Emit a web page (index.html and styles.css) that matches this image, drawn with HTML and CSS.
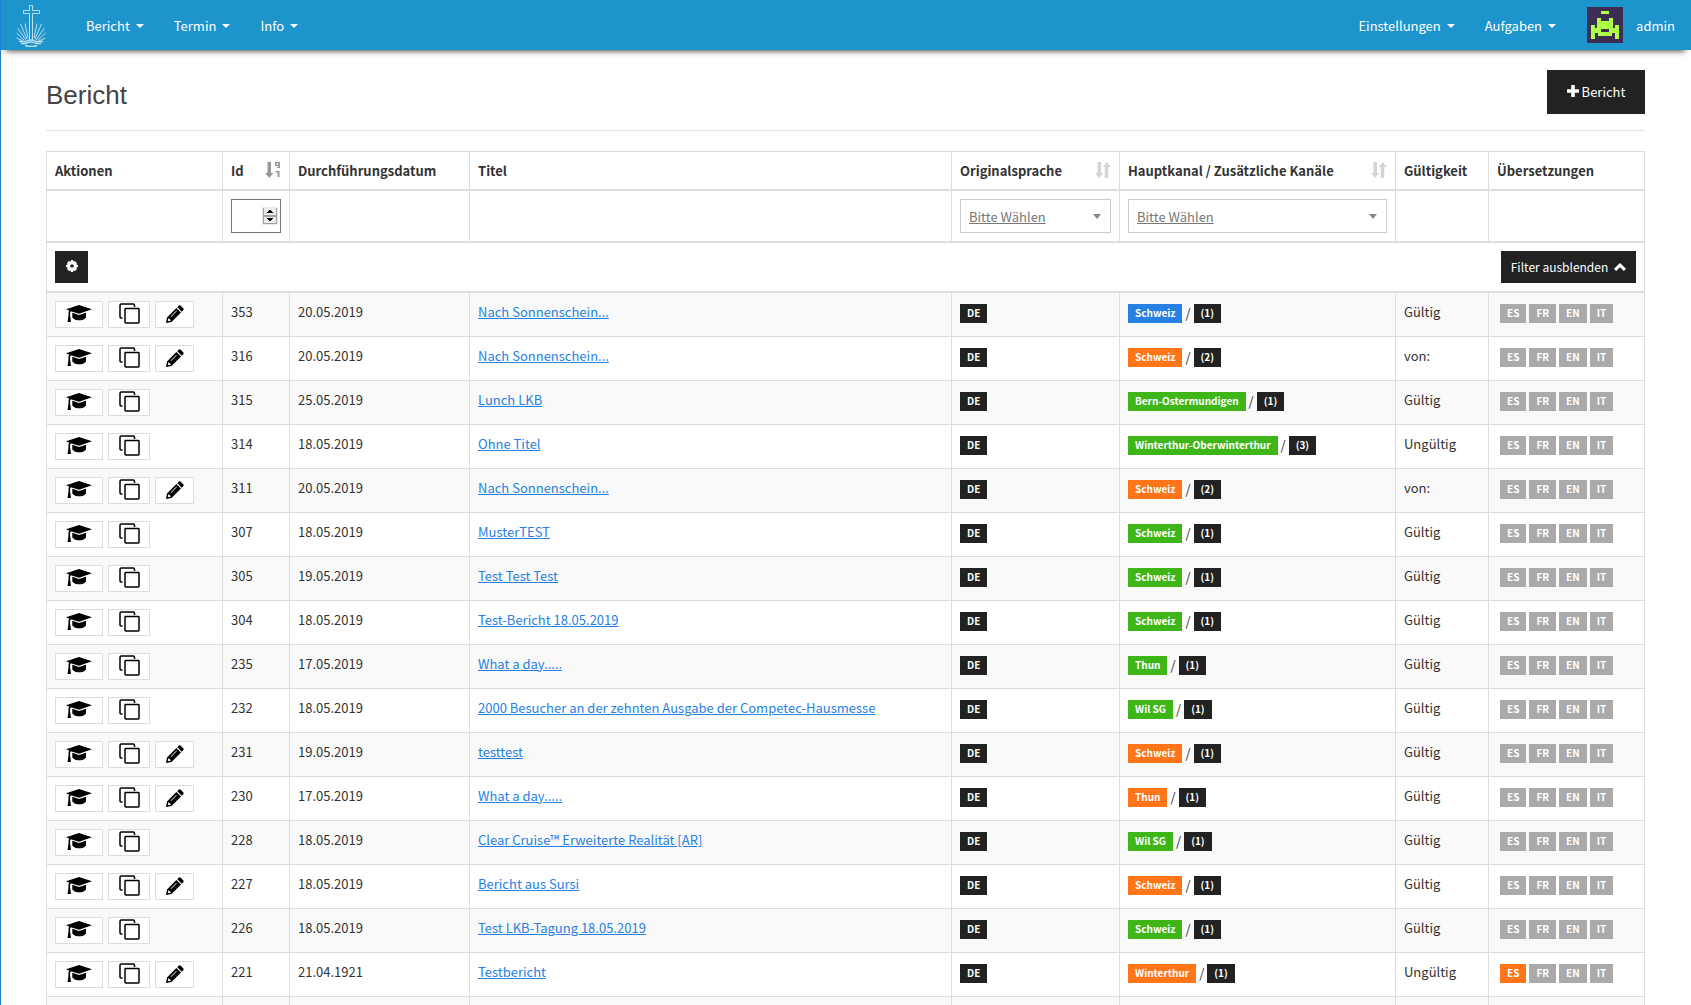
FILE: index.html
```html
<!DOCTYPE html>
<html lang="de">
<head>
<meta charset="utf-8">
<title>Bericht</title>
<link rel="stylesheet" href="styles.css">
</head>
<body>
<svg class="sprite" aria-hidden="true">
  <symbol id="i-cap" viewBox="0 0 26 17"><path d="M13 0 26 4.300 13 8.800 4.800 6.300C4.200 7.200 4 8.500 4.100 10.200L5 17H1.500L2.500 10.200C2.400 8.300 2.600 6.700 3.200 5.600L0 4.300ZM6.300 7.800 13 10 20 7.800V12.500C18.500 14.500 16 15.300 13.200 15.300S8 14.500 6.300 12.500Z"/></symbol>
  <symbol id="i-copy" viewBox="0 0 21 21"><path d="M3.500 15H2.200Q1 15 1 13.800V2.200Q1 1 2.200 1H14.300Q15.500 1 15.500 2.200V4M6.700 5.500H19.300Q20 5.500 20 6.200V19.300Q20 20 19.300 20H6.700Q6 20 6 19.300V6.200Q6 5.500 6.700 5.500Z" fill="none" stroke="currentColor" stroke-width="1.500"/></symbol>
  <symbol id="i-pen" viewBox="0 0 18 18"><path fill-rule="evenodd" d="M12.900 .6Q13.700 0 14.500 .6L17.400 3.500Q18 4.300 17.400 5.100L15.800 6.700 11.300 2.200ZM10.400 3 15 7.600 5.500 17 0 18 1 12.500ZM2.300 13.700 1.800 15.300 2.700 16.200 4.300 15.700 4.800 15.200 2.800 13.200ZM10.300 5.700 4.600 11.400 5.100 11.900 10.800 6.200Z"/></symbol>
  <symbol id="i-sort" viewBox="0 0 16 16"><path d="M2.500 0H6V11H8.300L4.300 16 0 11H2.500ZM9.800 16V5H7.800L11.700 0 16 5H13.300V16Z"/></symbol>
  <symbol id="i-sortnum" viewBox="0 0 16 16"><path fill-rule="evenodd" d="M2.500 0H6V11H8.300L4.300 16 0 11H2.500ZM10 0H15V6H12V5H13.300V4H10ZM11.500 1.300V2.800H13.300V1.300ZM10.500 9H14.500V15H12.500V10.500H10.500Z"/></symbol>
  <symbol id="i-plus" viewBox="0 0 12 12"><path d="M4.200 0H7.800V4.200H12V7.800H7.800V12H4.200V7.800H0V4.200H4.200Z"/></symbol>
  <symbol id="i-gear" viewBox="0 0 12 12"><path fill-rule="evenodd" d="M5 0H7L7.400 1.600 8.700 .9 10.900 3 10.300 4.500 12 5V7L10.300 7.500 11 9 9 11 7.500 10.400 7 12H5L4.500 10.400 3 11 1 9 1.700 7.500 0 7V5L1.700 4.500 1 3 3 1 4.500 1.700ZM6 4.200A1.800 1.800 0 1 0 6 7.800 1.800 1.800 0 1 0 6 4.200Z"/></symbol>
  <symbol id="i-up" viewBox="0 0 12 8"><path d="M6 0 12 5.800 9.900 8 6 4.200 2.100 8 0 5.800Z"/></symbol>
</svg>
<nav class="navbar">
  <a class="brand" href="#" aria-label="Startseite">
    <svg width="30" height="43" viewBox="0 0 30 43" fill="none" stroke="currentColor">
      <path d="M13.500 37V9.500H7.500V6.500H13.500V1.500H16.500V6.500H23.500V9.500H16.500V37"/>
      <path d="M12 34 9 19.500M11 35 4.500 20M10 36 1.500 24M8 36 .5 29M7 37 .5 34M18 34 21 19.500M19 35 25.500 20M20 36 28.500 24M22 36 29.500 29M23 37 29.500 34"/>
      <path d="M3 37.500H10Q12 36 15 36T20 37.500H27M5 39.500H10Q12 38 15 38T20 39.500H25M9 41.500Q15 43.500 21 41.500" stroke-width="1.500"/>
    </svg>
  </a>
  <a class="nav-link" href="#">Bericht<i class="caret"></i></a>
  <a class="nav-link" href="#">Termin<i class="caret"></i></a>
  <a class="nav-link" href="#">Info<i class="caret"></i></a>
  <span class="spacer"></span>
  <a class="nav-link" href="#">Einstellungen<i class="caret"></i></a>
  <a class="nav-link" href="#">Aufgaben<i class="caret"></i></a>
  <a class="user" href="#">
    <svg width="36" height="36" viewBox="0 0 36 36" shape-rendering="crispEdges"><path fill="#3d2d52" d="M0 0H36V36H0Z"/><path fill="#adff45" fill-rule="evenodd" d="M14 4H22V7H14ZM10 11H14V14H22V11H26V21H28V18H32V32H28V26H25V29H11V26H8V32H4V18H8V21H10ZM14 22V25H22V22Z"/></svg>
    <span>admin</span>
  </a>
</nav>
<main class="page">
  <header class="page-head">
    <h1>Bericht</h1>
    <button class="btn btn-new" type="button"><svg width="12" height="12"><use href="#i-plus"/></svg>Bericht</button>
  </header>
  <table class="grid">
    <colgroup><col class="c-act"><col class="c-id"><col class="c-date"><col><col class="c-lang"><col class="c-chan"><col class="c-valid"><col class="c-trans"></colgroup>
    <thead>
      <tr class="heads">
        <th>Aktionen</th>
        <th><div class="head"><span>Id</span><svg class="sorted" width="16" height="16"><use href="#i-sortnum"/></svg></div></th>
        <th>Durchführungsdatum</th>
        <th>Titel</th>
        <th><div class="head"><span>Originalsprache</span><svg width="16" height="16"><use href="#i-sort"/></svg></div></th>
        <th><div class="head"><span>Hauptkanal / Zusätzliche Kanäle</span><svg width="16" height="16"><use href="#i-sort"/></svg></div></th>
        <th>Gültigkeit</th>
        <th>Übersetzungen</th>
      </tr>
      <tr class="filters">
        <td></td>
        <td><div class="number"><input type="number" aria-label="Id"><svg width="16" height="18" viewBox="0 0 16 18" shape-rendering="crispEdges"><path fill="#ececec" d="M0 0H16V18H0Z"/><path fill="none" stroke="#a0a0a0" d="M1.500 1V8.500H14.500V1M1.500 9.500H14.500V16.500H1.500Z"/><path d="M7 3H9V4H10V5H11V6H5V5H6V4H7ZM5 11H11V12H10V13H9V14H7V13H6V12H5Z"/></svg></div></td>
        <td></td>
        <td></td>
        <td><div class="select"><select aria-label="Originalsprache"><option>Bitte Wählen</option></select></div></td>
        <td><div class="select"><select aria-label="Hauptkanal"><option>Bitte Wählen</option></select></div></td>
        <td></td>
        <td></td>
      </tr>
      <tr class="tools">
        <td colspan="8"><div class="toolbar">
          <button class="btn btn-gear" type="button" aria-label="Optionen"><svg width="12" height="12"><use href="#i-gear"/></svg></button>
          <button class="btn btn-filter" type="button">Filter ausblenden<svg width="12" height="8"><use href="#i-up"/></svg></button>
        </div></td>
      </tr>
    </thead>
    <tbody id="rows"></tbody>
  </table>
</main>
<script src="rows.js"></script>
</body>
</html>
```
FILE: styles.css
```css
* { box-sizing: border-box; }
body {
  margin: 0;
  height: 100vh;
  display: flex;
  flex-direction: column;
  border-left: 1px solid #1b7fd8;
  background: #fff;
  color: #333;
  font: 13px/21px "Noto Sans CJK SC", "Noto Sans", sans-serif;
}
svg { display: block; fill: currentColor; flex: none; }
.sprite { display: none; }
a { color: #2780e3; }
button, input, select { font: inherit; margin: 0; border-radius: 0; }

.navbar {
  position: relative;
  z-index: 1;
  flex: none;
  display: flex;
  align-items: center;
  height: 50px;
  margin-left: -1px;
  padding: 0 16px;
  background: #1e94cd;
  box-shadow: 0 7px 6px -6px #444;
}
.navbar a { color: #fff; text-decoration: none; }
.brand { margin-right: 25px; opacity: .7; }
.brand svg { fill: none; }
.nav-link { display: flex; align-items: center; gap: 6px; padding: 0 15px; }
.caret { border: 4px solid transparent; border-top-color: #fff; border-bottom: 0; margin-top: 2px; }
.spacer { flex: 1; }
.user { display: flex; align-items: center; gap: 13px; padding-left: 16px; }

.page { flex: 1; min-height: 0; padding: 20px 46px 0 45px; overflow-y: auto; scrollbar-width: none; }
.page-head {
  display: flex;
  justify-content: space-between;
  align-items: flex-start;
  height: 61px;
  margin-bottom: 20px;
  border-bottom: 1px solid #e3e3e3;
}
h1 { margin: 9px 0 0; color: #444; font: 26px/33px "Liberation Sans", Arial, sans-serif; }
.btn {
  display: flex;
  align-items: center;
  justify-content: center;
  border: 0;
  padding: 0 0 2px;
  background: #222;
  color: #fff;
}
.btn-new { gap: 3px; width: 98px; height: 44px; }

.grid {
  width: 100%;
  table-layout: fixed;
  border-collapse: separate;
  border-spacing: 0;
  border: 1px solid #ddd;
  border-width: 1px 1px 0 0;
}
.c-act { width: 176px; }
.c-id { width: 67px; }
.c-date { width: 180px; }
.c-lang { width: 168px; }
.c-chan { width: 276px; }
.c-valid { width: 93px; }
.c-trans { width: 156px; }
th, td {
  padding: 8px;
  border: 1px solid #ddd;
  border-width: 0 0 1px 1px;
  text-align: left;
  vertical-align: top;
  white-space: nowrap;
}
thead th, thead td { border-bottom-width: 2px; }
.heads { height: 39px; }
.filters { height: 52px; }
.tools { height: 50px; }
tbody tr { height: 44px; }
tbody tr:nth-child(odd) { background: #f9f9f9; }
.head { display: flex; justify-content: space-between; align-items: flex-start; color: #333; }
.head svg { margin-top: 2px; color: #d5d5d5; }
.head .sorted { color: #999; }

.number, .select { display: grid; align-items: center; }
.number > *, .select > *, .select::after { grid-area: 1 / 1; }
.number input { width: 100%; height: 34px; border: 1px solid #767676; background: #fff; appearance: textfield; }
.number svg { justify-self: end; margin-right: 3px; color: #000; }
.select select {
  width: 100%;
  height: 34px;
  padding: 0 8px;
  border: 1px solid #ccc;
  background: #fff;
  color: #777;
  text-decoration: underline;
  appearance: none;
}
.select::after {
  content: "";
  justify-self: end;
  margin-right: 10px;
  border: 4px solid transparent;
  border-top: 5px solid #888;
  border-bottom: 0;
  pointer-events: none;
}
.toolbar { display: flex; justify-content: space-between; }
.btn-gear { width: 33px; height: 32px; }
.btn-filter { width: 135px; height: 32px; gap: 6px; font-size: 12px; }
.btn-filter svg { margin-top: 2px; }

.actions { display: flex; gap: 5px; }
.act {
  display: flex;
  align-items: center;
  justify-content: center;
  height: 27px;
  padding: 0 0 2px;
  border: 1px solid #ddd;
  background: #fff;
  color: #000;
}
.act-cap { width: 48px; }
.act-copy { width: 42px; }
.act-pen { width: 39px; }
.tags { display: flex; gap: 3px; padding-top: 3px; }
.langs { padding-left: 3px; }
.tag {
  height: 19px;
  padding: 0 7px;
  background: #222;
  color: #fff;
  font-size: 10px;
  font-weight: 700;
  line-height: 18px;
}
.blue { background: #2780e3; }
.orange { background: #ff7518; }
.green { background: #3fb618; }
.grey { background: #aaa; }
.slash { line-height: 17px; }
```
FILE: rows.js
```js
const DE = '<div class="tags"><span class="tag">DE</span></div>';
// id, date, title, channel, channel colour, extra channels, validity, editable, active translation
const reports = [
  [353, '20.05.2019', 'Nach Sonnenschein...', 'Schweiz', 'blue', 1, 'Gültig', true],
  [316, '20.05.2019', 'Nach Sonnenschein...', 'Schweiz', 'orange', 2, 'von:', true],
  [315, '25.05.2019', 'Lunch LKB', 'Bern-Ostermundigen', 'green', 1, 'Gültig', false],
  [314, '18.05.2019', 'Ohne Titel', 'Winterthur-Oberwinterthur', 'green', 3, 'Ungültig', false],
  [311, '20.05.2019', 'Nach Sonnenschein...', 'Schweiz', 'orange', 2, 'von:', true],
  [307, '18.05.2019', 'MusterTEST', 'Schweiz', 'green', 1, 'Gültig', false],
  [305, '19.05.2019', 'Test Test Test', 'Schweiz', 'green', 1, 'Gültig', false],
  [304, '18.05.2019', 'Test-Bericht 18.05.2019', 'Schweiz', 'green', 1, 'Gültig', false],
  [235, '17.05.2019', 'What a day.....', 'Thun', 'green', 1, 'Gültig', false],
  [232, '18.05.2019', '2000 Besucher an der zehnten Ausgabe der Competec-Hausmesse', 'Wil SG', 'green', 1, 'Gültig', false],
  [231, '19.05.2019', 'testtest', 'Schweiz', 'orange', 1, 'Gültig', true],
  [230, '17.05.2019', 'What a day.....', 'Thun', 'orange', 1, 'Gültig', true],
  [228, '18.05.2019', 'Clear Cruise™ Erweiterte Realität [AR]', 'Wil SG', 'green', 1, 'Gültig', false],
  [227, '18.05.2019', 'Bericht aus Sursi', 'Schweiz', 'orange', 1, 'Gültig', true],
  [226, '18.05.2019', 'Test LKB-Tagung 18.05.2019', 'Schweiz', 'green', 1, 'Gültig', false],
  [221, '21.04.1921', 'Testbericht', 'Winterthur', 'orange', 1, 'Ungültig', true, 'ES'],
];

const action = (name, label, w, h) =>
  `<button type="button" class="act act-${name}" aria-label="${label}"><svg width="${w}" height="${h}"><use href="#i-${name}"/></svg></button>`;

const row = ([id, date, title, channel, colour, extra, valid, editable, active]) => `<tr>
  <td><div class="actions">${action('cap', 'Details', 26, 17)}${action('copy', 'Kopieren', 21, 21)}${editable ? action('pen', 'Bearbeiten', 18, 18) : ''}</div></td>
  <td>${id}</td><td>${date}</td><td><a href="#">${title}</a></td><td>${DE}</td>
  <td><div class="tags"><span class="tag ${colour}">${channel}</span><span class="slash">/</span><span class="tag">(${extra})</span></div></td>
  <td>${valid}</td>
  <td><div class="tags langs">${['ES', 'FR', 'EN', 'IT'].map(l => `<span class="tag ${l === active ? 'orange' : 'grey'}">${l}</span>`).join('')}</div></td>
</tr>`;

document.getElementById('rows').innerHTML =
  reports.map(row).join('') + '<tr>' + '<td></td>'.repeat(8) + '</tr>';
```
